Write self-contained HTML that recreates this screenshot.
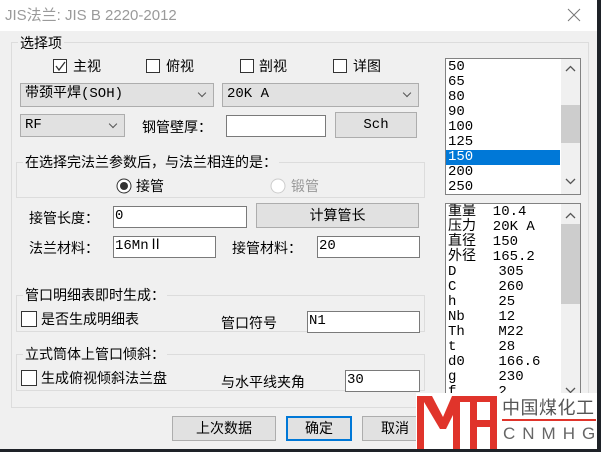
<!DOCTYPE html>
<html><head><meta charset="utf-8"><style>
*{margin:0;padding:0;box-sizing:border-box}
body{width:601px;height:452px;background:#1e2228;position:relative;overflow:hidden;font-family:"Noto Sans CJK SC","Liberation Sans",sans-serif;font-size:14px;color:#000}
.a{position:absolute}
.win{left:0;top:0;width:597px;height:449px;background:#f0f0f0}
.title{left:0;top:0;width:597px;height:31px;background:#fff}
.grp{position:absolute;border:1px solid #dcdcdc}
.lg{position:absolute;background:#f0f0f0;padding:0 2px;line-height:16px;white-space:nowrap}
.cb{position:absolute;width:14px;height:14px;border:1px solid #333;background:#fff}
.inp{position:absolute;background:#fff;border:1px solid #7a7a7a;font-family:"Liberation Mono","Noto Sans CJK SC",monospace;font-size:14px;line-height:19px;padding-left:1px}
.btn{position:absolute;background:#e1e1e1;border:1px solid #adadad;text-align:center}
.t{position:absolute;white-space:nowrap;line-height:16px}
.cmb{position:absolute;background:#e1e1e1;border:1px solid #adadad;font-family:"Liberation Mono","Noto Sans CJK SC",monospace;line-height:21px;padding-left:4px}
.cmb:after{content:"";position:absolute;right:8px;top:6px;width:5px;height:5px;border-right:1px solid #555;border-bottom:1px solid #555;transform:rotate(45deg)}
.lb{position:absolute;background:#fff;border:1px solid #828282;overflow:hidden;font-family:"Liberation Mono","Noto Sans CJK SC",monospace;font-size:14px}
.lb div.r{height:15px;line-height:15px;padding-left:2px;white-space:pre}
.sb{position:absolute;right:0;top:0;width:19px;height:100%;background:#f0f0f0}
.th{position:absolute;left:0;width:19px;background:#cdcdcd}
</style></head><body>
<div class="a win"></div>
<div class="a title"></div>
<div class="t" style="left:5px;top:8px;font-size:15px;color:#9a9a9a;font-family:'Liberation Sans','Noto Sans CJK SC',sans-serif">JIS法兰: JIS B 2220-2012</div>
<svg class="a" style="left:567px;top:8px" width="14" height="14"><path d="M1 1L13 13M13 1L1 13" stroke="#777" stroke-width="1"/></svg>

<div class="grp" style="left:11px;top:42px;width:578px;height:366px"></div>
<div class="lg" style="left:18px;top:35px">选择项</div>

<div class="cb" style="left:53px;top:59px"></div>
<svg class="a" style="left:55px;top:61px" width="11" height="11"><path d="M1 5L4 9L10 1" stroke="#333" fill="none" stroke-width="1.3"/></svg>
<div class="t" style="left:73px;top:58px">主视</div>
<div class="cb" style="left:146px;top:59px"></div><div class="t" style="left:166px;top:58px">俯视</div>
<div class="cb" style="left:240px;top:59px"></div><div class="t" style="left:259px;top:58px">剖视</div>
<div class="cb" style="left:333px;top:59px"></div><div class="t" style="left:353px;top:58px">详图</div>

<div class="cmb" style="left:20px;top:83px;width:194px;height:24px">带颈平焊(SOH)</div>
<div class="cmb" style="left:222px;top:83px;width:197px;height:24px">20K A</div>
<div class="cmb" style="left:20px;top:114px;width:105px;height:23px">RF</div>
<div class="t" style="left:142px;top:119px">钢管壁厚：</div>
<div class="inp" style="left:226px;top:115px;width:100px;height:22px"></div>
<div class="btn" style="left:335px;top:112px;width:82px;height:26px;line-height:24px;font-family:'Liberation Mono',monospace">Sch</div>

<div class="grp" style="left:16px;top:162px;width:409px;height:36px"></div>
<div class="lg" style="left:23px;top:154px">在选择完法兰参数后，与法兰相连的是：</div>
<svg class="a" style="left:116px;top:178px" width="16" height="16"><circle cx="8" cy="8" r="7" fill="#fff" stroke="#333"/><circle cx="8" cy="8" r="4" fill="#333"/></svg>
<div class="t" style="left:136px;top:178px">接管</div>
<svg class="a" style="left:270px;top:178px" width="16" height="16"><circle cx="8" cy="8" r="7" fill="#fff" stroke="#ccc"/></svg>
<div class="t" style="left:291px;top:178px;color:#999">锻管</div>

<div class="t" style="left:29px;top:210px">接管长度：</div>
<div class="inp" style="left:113px;top:206px;width:134px;height:22px">0</div>
<div class="btn" style="left:256px;top:203px;width:163px;height:25px;line-height:23px">计算管长</div>
<div class="t" style="left:29px;top:240px">法兰材料：</div>
<div class="inp" style="left:113px;top:236px;width:103px;height:22px">16MnⅡ</div>
<div class="t" style="left:232px;top:240px">接管材料：</div>
<div class="inp" style="left:317px;top:236px;width:103px;height:22px">20</div>

<div class="grp" style="left:16px;top:295px;width:409px;height:37px"></div>
<div class="lg" style="left:23px;top:287px">管口明细表即时生成：</div>
<div class="cb" style="left:21px;top:311px;width:16px;height:16px"></div>
<div class="t" style="left:41px;top:311px">是否生成明细表</div>
<div class="t" style="left:221px;top:315px;background:#f0f0f0;padding-right:4px">管口符号</div>
<div class="inp" style="left:307px;top:311px;width:113px;height:22px">N1</div>

<div class="grp" style="left:16px;top:354px;width:409px;height:37px"></div>
<div class="lg" style="left:23px;top:346px">立式筒体上管口倾斜：</div>
<div class="cb" style="left:21px;top:370px;width:16px;height:16px"></div>
<div class="t" style="left:41px;top:370px">生成俯视倾斜法兰盘</div>
<div class="t" style="left:221px;top:374px;background:#f0f0f0;padding-right:2px">与水平线夹角</div>
<div class="inp" style="left:345px;top:370px;width:75px;height:22px">30</div>

<div class="btn" style="left:172px;top:416px;width:104px;height:25px;line-height:23px">上次数据</div>
<div class="btn" style="left:286px;top:416px;width:66px;height:25px;line-height:21px;border:2px solid #0078d7">确定</div>
<div class="btn" style="left:362px;top:416px;width:66px;height:25px;line-height:23px">取消</div>

<div class="lb" style="left:445px;top:58px;width:136px;height:137px">
<div style="padding-top:1px">
<div class="r">50</div><div class="r">65</div><div class="r">80</div><div class="r">90</div><div class="r">100</div><div class="r">125</div><div class="r" style="background:#0078d7;color:#fff;width:114px">150</div><div class="r">200</div><div class="r">250</div></div>
<div class="sb"><div class="th" style="top:46px;height:38px"></div>
<svg class="a" style="left:4px;top:6px" width="11" height="7"><path d="M1 6L5.5 1.5L10 6" stroke="#555" fill="none" stroke-width="1.3"/></svg>
<svg class="a" style="left:4px;top:119px" width="11" height="7"><path d="M1 1L5.5 5.5L10 1" stroke="#555" fill="none" stroke-width="1.3"/></svg></div>
</div>

<div class="lb" style="left:445px;top:203px;width:136px;height:200px">
<div style="padding-top:1px">
<div class="r">重量  10.4</div><div class="r">压力  20K A</div><div class="r">直径  150</div><div class="r">外径  165.2</div><div class="r">D     305</div><div class="r">C     260</div><div class="r">h     25</div><div class="r">Nb    12</div><div class="r">Th    M22</div><div class="r">t     28</div><div class="r">d0    166.6</div><div class="r">g     230</div><div class="r">f     2</div></div>
<div class="sb"><div class="th" style="top:20px;height:80px"></div>
<svg class="a" style="left:4px;top:8px" width="11" height="7"><path d="M1 6L5.5 1.5L10 6" stroke="#555" fill="none" stroke-width="1.3"/></svg>
<svg class="a" style="left:4px;top:183px" width="11" height="7"><path d="M1 1L5.5 5.5L10 1" stroke="#555" fill="none" stroke-width="1.3"/></svg></div>
</div>

<div class="a" style="left:416px;top:393px;width:181px;height:56px;background:#fff"></div>
<svg class="a" style="left:416px;top:393px" width="84" height="56">
<g fill="#e0342b">
<rect x="1" y="3" width="7" height="53"/>
<rect x="1" y="3" width="14" height="6"/>
<path d="M8 3L16 3L27 24L36 3L80 3L80 9L44 9L44 56L37 56L37 22L30 36L24 36L8 9Z"/>
<rect x="54" y="3" width="7" height="53"/>
<rect x="54" y="27" width="26" height="7"/>
<rect x="74" y="3" width="7" height="53"/>
</g>
</svg>
<div class="t" style="left:502px;top:397px;font-size:18px;line-height:20px;color:#555;letter-spacing:0.5px">中国煤化工</div>
<div class="a" style="left:502px;top:419px;width:94px;height:2px;background:#e0342b"></div>
<div class="t" style="left:503px;top:424px;font-size:17px;line-height:20px;color:#666;letter-spacing:7px;font-family:'Liberation Sans',sans-serif">CNMHG</div>
</body></html>
